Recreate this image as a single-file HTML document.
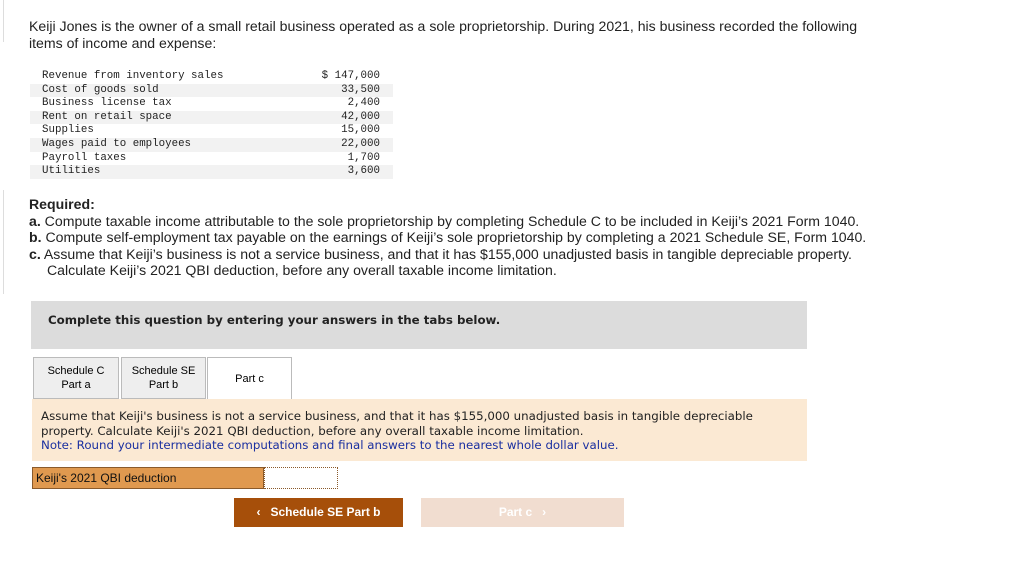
<!DOCTYPE html><html><head><style>
body{margin:0;width:1024px;height:569px;background:#fff;position:relative;font-family:"Liberation Sans",sans-serif;overflow:hidden}
.a{position:absolute}
.p{font-size:14.1px;color:#222;line-height:16.6px}
.t{font-family:"Liberation Mono",monospace;font-size:10.8px;color:#222}
.r{position:absolute;left:30px;width:363px;height:13.6px}
.r span{position:absolute;left:12px;top:0}
.r b{position:absolute;right:13px;top:0;font-weight:normal}
.tab{position:absolute;top:357px;height:42px;background:#eee;border:1px solid #bbb;font-size:11px;text-align:center;display:flex;align-items:center;justify-content:center;line-height:14px;box-sizing:border-box}
.v{font-family:"DejaVu Sans",sans-serif;font-size:11.8px;line-height:14.5px}
</style></head><body>
<div class="a" style="left:0;top:0;width:3px;height:42px;border-right:1px solid #ddd"></div>
<div class="a" style="left:0;top:190px;width:3px;height:104px;border-right:1px solid #ddd"></div>
<div class="a p" style="left:29px;top:18px;width:860px;line-height:17px">Keiji Jones is the owner of a small retail business operated as a sole proprietorship. During 2021, his business recorded the following<br>items of income and expense:</div>
<div class="t">
<div class="r" style="top:70px"><span>Revenue from inventory sales</span><b>$ 147,000</b></div>
<div class="r" style="top:83.6px;background:#f2f2f2"><span>Cost of goods sold</span><b>33,500</b></div>
<div class="r" style="top:97.2px"><span>Business license tax</span><b>2,400</b></div>
<div class="r" style="top:110.8px;background:#f2f2f2"><span>Rent on retail space</span><b>42,000</b></div>
<div class="r" style="top:124.4px"><span>Supplies</span><b>15,000</b></div>
<div class="r" style="top:138px;background:#f2f2f2"><span>Wages paid to employees</span><b>22,000</b></div>
<div class="r" style="top:151.6px"><span>Payroll taxes</span><b>1,700</b></div>
<div class="r" style="top:165.2px;background:#f2f2f2"><span>Utilities</span><b>3,600</b></div>
</div>
<div class="a p" style="left:29px;top:196px;width:960px"><b>Required:</b><br><b>a.</b> Compute taxable income attributable to the sole proprietorship by completing Schedule C to be included in Keiji’s 2021 Form 1040.<br><b>b.</b> Compute self-employment tax payable on the earnings of Keiji’s sole proprietorship by completing a 2021 Schedule SE, Form 1040.<br><b>c.</b> Assume that Keiji’s business is not a service business, and that it has $155,000 unadjusted basis in tangible depreciable property.<br><span style="padding-left:18px">Calculate Keiji’s 2021 QBI deduction, before any overall taxable income limitation.</span></div>
<div class="a" style="left:31px;top:301px;width:776px;height:48px;background:#dcdcdc"></div>
<div class="a v" style="left:48px;top:313px;font-weight:bold;color:#222">Complete this question by entering your answers in the tabs below.</div>
<div class="tab" style="left:33px;width:86px">Schedule C<br>Part a</div>
<div class="tab" style="left:121px;width:85px">Schedule SE<br>Part b</div>
<div class="tab" style="left:207px;width:85px;background:#fff;border-bottom:none;height:43px">Part c</div>
<div class="a" style="left:32px;top:399px;width:775px;height:62px;background:#fbe9d3"></div>
<div class="a v" style="left:41px;top:409px;color:#222">Assume that Keiji's business is not a service business, and that it has $155,000 unadjusted basis in tangible depreciable<br>property. Calculate Keiji's 2021 QBI deduction, before any overall taxable income limitation.<br><span style="color:#1a2fa0">Note: Round your intermediate computations and final answers to the nearest whole dollar value.</span></div>
<div class="a" style="left:32px;top:467px;width:232px;height:22px;background:#e0994f;border:1px solid #8a5a2b;box-sizing:border-box;font-size:12px;line-height:20px;padding-left:3px;color:#111">Keiji's 2021 QBI deduction</div>
<div class="a" style="left:264px;top:467px;width:74px;height:22px;border:1px dotted #8a5a2b;box-sizing:border-box"></div>
<div class="a" style="left:234px;top:498px;width:169px;height:29px;background:#a64f0a;color:#fff;font-size:12px;font-weight:bold;line-height:29px;text-align:center">‹&nbsp;&nbsp;&nbsp;Schedule SE Part b</div>
<div class="a" style="left:421px;top:498px;width:203px;height:29px;background:#f1ddd0;color:#fff;font-size:12px;font-weight:bold;line-height:29px;text-align:center">Part c&nbsp;&nbsp;&nbsp;›</div>
</body></html>
